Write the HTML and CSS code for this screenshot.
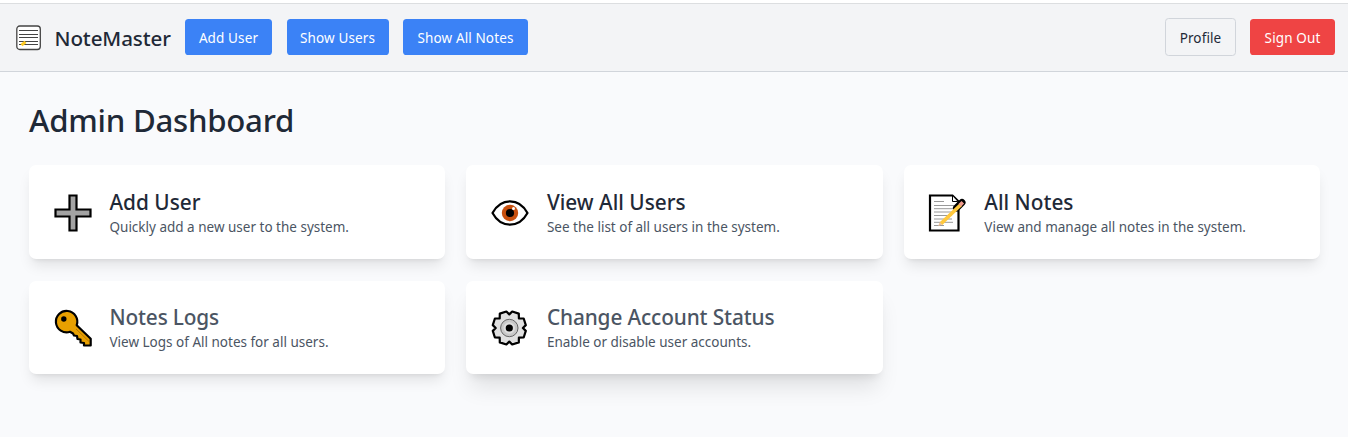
FILE: index.html
```html
<!DOCTYPE html>
<html lang="en">
<head>
<meta charset="utf-8">
<title>NoteMaster</title>
<link rel="stylesheet" href="styles.css">
</head>
<body>
<header class="navbar">
  <div class="brand">
    <svg class="logo" viewBox="0 0 26 26" fill="none"><rect x=".8" y="1" width="23.5" height="23.5" rx="3" fill="#fff" stroke="#444" stroke-width="1.3"/><path d="M3 5.500h19M3 9.500h19M3 12.500h19M3 16.500h19M3 19.500h19" stroke="#444" stroke-width="1.1"/><path d="M5.500 20.200l4-3.300" stroke="#ffcb22" stroke-width="3"/></svg>
    <span class="brand-name">NoteMaster</span>
  </div>
  <nav class="nav-actions">
    <button class="btn btn-add">Add User</button>
    <button class="btn btn-users">Show Users</button>
    <button class="btn btn-notes">Show All Notes</button>
  </nav>
  <div class="account">
    <button class="btn btn-profile">Profile</button>
    <button class="btn btn-signout">Sign Out</button>
  </div>
</header>
<main class="dashboard">
  <h1 class="page-title">Admin Dashboard</h1>
  <div class="cards">
    <section class="card">
      <svg class="icon" viewBox="0 0 38 38"><path d="M15.500 1.500h7v14h14v7h-14v14h-7v-14h-14v-7h14z" fill="#a3a3a3" stroke="#000" stroke-width="2.200"/></svg>
      <div class="card-body"><h2 class="card-title">Add User</h2><p class="card-text">Quickly add a new user to the system.</p></div>
    </section>
    <section class="card">
      <svg class="icon" viewBox="0 0 38 38"><path d="M1.500 19C10 3.500 28 3.500 36.500 19C28 34.500 10 34.500 1.500 19z" fill="#fff" stroke="#000" stroke-width="2.200" stroke-linejoin="round"/><circle cx="19" cy="19" r="8.200" fill="#c8500f"/><circle cx="19" cy="19" r="4.100"/><circle cx="22.500" cy="14.500" r="1.500" fill="#fff"/></svg>
      <div class="card-body"><h2 class="card-title">View All Users</h2><p class="card-text">See the list of all users in the system.</p></div>
    </section>
    <section class="card">
      <svg class="icon" viewBox="0 0 38 38" fill="none"><path d="M2 1.500h22.500l6 6V36.500H2z" fill="#fff" stroke="#000" stroke-width="2.200"/><path d="M24.500 2v5.500h5" fill="#fff" stroke="#000"/><path d="M6 7.500h10M6 11.500h20M6 14.700h20M6 18h20M6 21.500h18M6 25h18M6 28.300h19M6 31.500h10" stroke="#999"/><path d="M28.500 14l5.500-5.500" stroke="#000" stroke-width="7" stroke-linecap="round"/><path d="M13 29.700L33 10.500" stroke="#ffc83d" stroke-width="3.700"/><path d="M31.800 11.200l3-3" stroke="#ef9a8d" stroke-width="3.700"/><path d="M10 32.200l1.800-4 2.300 2.300z" fill="#e9bd96"/></svg>
      <div class="card-body"><h2 class="card-title">All Notes</h2><p class="card-text">View and manage all notes in the system.</p></div>
    </section>
    <section class="card card-lower">
      <svg class="icon" viewBox="0 0 38 38"><path d="M22.700 16.200A10.700 10.700 0 1 0 16 22.800L19 24.500 20 26.500 23 27 23.500 30 26.500 30.500 26.500 33.500 30 34 30 36.500H36.700V29.800z" fill="#e8a000" stroke="#000" stroke-width="2.200" stroke-linejoin="round"/><circle cx="9.800" cy="10" r="2.700"/><path d="M22 20l13 12.500" stroke="#b77705" fill="none"/></svg>
      <div class="card-body"><h2 class="card-title muted t-logs">Notes Logs</h2><p class="card-text">View Logs of All notes for all users.</p></div>
    </section>
    <section class="card card-lower card-raised">
      <svg class="icon" viewBox="0 0 38 38"><path d="M18.300 5.400L21.200 2.500 27.800 4.600 27.900 9.400 32.700 9.500 34.800 16.100 31.900 19 34.800 21.900 32.700 28.500 27.900 28.600 27.800 33.400 21.200 35.500 18.300 32.600 15.400 35.500 8.800 33.400 8.700 28.600 3.900 28.500 1.800 21.900 4.700 19 1.800 16.100 3.900 9.500 8.700 9.400 8.800 4.600 15.400 2.500z" fill="#e0e0e0" stroke="#000" stroke-width="2.200" stroke-linejoin="round"/><circle cx="18.300" cy="19" r="8.700" fill="#c8c8c8" stroke="#666" stroke-width="1"/><circle cx="18.300" cy="19" r="5.700" fill="#dedede"/><circle cx="18.300" cy="19" r="3.600"/></svg>
      <div class="card-body"><h2 class="card-title muted t-status">Change Account Status</h2><p class="card-text">Enable or disable user accounts.</p></div>
    </section>
  </div>
</main>
</body>
</html>
```
FILE: styles.css
```css
* { box-sizing: border-box; }
body { margin: 0; padding-top: 3px; min-height: 437px; overflow: hidden; font-family: "Noto Sans", "Open Sans", sans-serif; color: #1f2937; background: linear-gradient(#fff 3px, #f9fafc 3px) no-repeat; }
h1, h2, p { margin: 0; }
.navbar { display: flex; align-items: center; height: 69px; padding: 0 13px 1px 16px; background: #f3f4f6; border-top: 1px solid #dcdee0; border-bottom: 1px solid #d1d5db; }
.brand { display: flex; align-items: center; gap: 12.500px; width: 169px; }
.logo { width: 26px; height: 26px; flex: none; margin-top: 1px; }
.brand-name { padding-top: 1px; font-size: 20.600px; letter-spacing: -.1px; font-weight: 500; white-space: nowrap; }
.nav-actions { display: flex; gap: 14.500px; }
.account { display: flex; align-items: center; gap: 14px; margin-left: auto; }
.btn { height: 36px; padding: 2px 0 0; border: 0; border-radius: 3.600px; background: #3b82f6; color: #fff; font: 400 13.500px "Noto Sans", sans-serif; letter-spacing: .12px; white-space: nowrap; }
.btn-add { width: 87px; }
.btn-users { width: 102px; }
.btn-notes { width: 125px; }
.btn-profile { width: 71px; height: 38px; background: transparent; color: #1f2937; border: 1px solid #d1d5db; }
.btn-signout { width: 85px; background: #ef4444; }
.dashboard { padding: 27px 28px 0 29px; }
.page-title { height: 66px; font-size: 31.200px; letter-spacing: -.25px; line-height: 43px; font-weight: 500; }
.cards { display: grid; grid-template-columns: repeat(3, 1fr); gap: 22px 21.300px; }
.card { display: flex; align-items: center; gap: 18px; height: 94px; padding: 2px 25px 0 24.500px; background: #fff; border-radius: 7.200px; box-shadow: 0 9px 13.500px -3px rgba(0,0,0,.1), 0 4px 5.400px -4px rgba(0,0,0,.1); }
.card-lower { height: 93px; padding-top: 1px; }
.card-raised { box-shadow: 0 18px 22.500px -5px rgba(0,0,0,.1), 0 7px 9px -5px rgba(0,0,0,.1); }
.icon { width: 38px; height: 38px; flex: none; }
.card-body { padding-top: 3px; }
.card-title { font-size: 20.800px; line-height: 25px; font-weight: 500; white-space: nowrap; }
.t-logs { letter-spacing: -.15px; }
.t-status { letter-spacing: -.12px; }
.card-text { font-size: 13.500px; line-height: 24px; color: #4b5563; white-space: nowrap; }
.muted { color: #4b5563; }
```
